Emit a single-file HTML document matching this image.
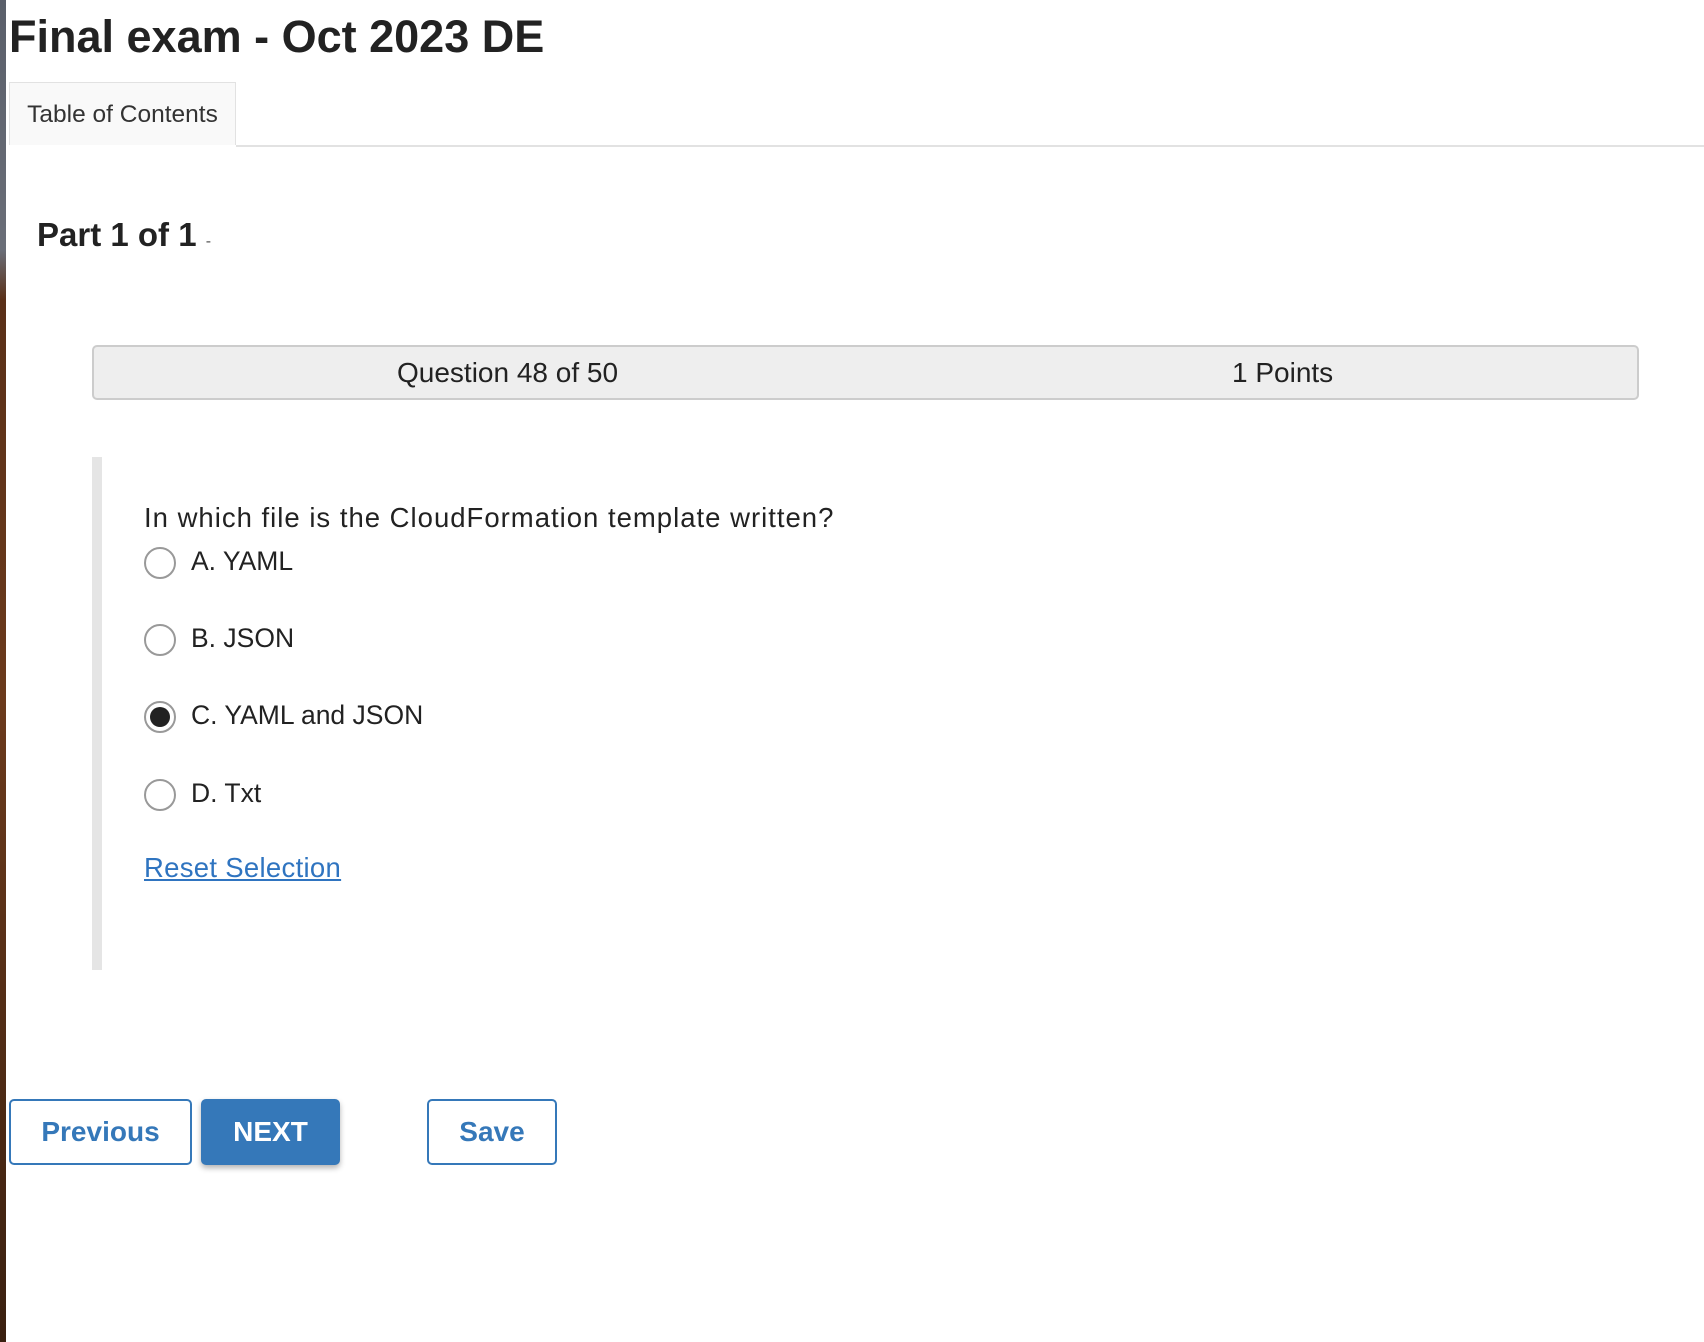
<!DOCTYPE html>
<html><head><meta charset="utf-8"><style>
html,body{margin:0;padding:0;width:1704px;height:1342px;overflow:hidden;background:#fff;font-family:"Liberation Sans",sans-serif;color:#222;position:relative}
.strip{position:absolute;left:0;top:0;width:6px;height:1342px;background:linear-gradient(#5a5f6a 0,#6a6e78 250px,#5a3018 300px,#6b3a1c 700px,#3a2010 1342px)}
.abs{position:absolute;white-space:nowrap}
h1{position:absolute;left:9px;top:11px;margin:0;font-size:45px;font-weight:bold;color:#222}
.tab{position:absolute;left:9px;top:82px;width:227px;height:63px;background:#f9f9f9;border:1px solid #e2e2e2;border-bottom:none;box-sizing:border-box;font-size:24.5px;color:#333;line-height:63px;text-align:center}
.line{position:absolute;left:236px;top:145px;right:0;height:2px;background:#e2e2e2}
.bar{position:absolute;left:92px;top:345px;width:1547px;height:55px;background:#eee;border:2px solid #ccc;border-radius:5px;box-sizing:border-box;font-size:28px;color:#222}
.vbar{position:absolute;left:92px;top:457px;width:10px;height:513px;background:#e5e5e5}
.radio{position:absolute;left:144px;width:28px;height:28px;border:2px solid #999;border-radius:50%;background:#fff}
.radio.on::after{content:"";position:absolute;left:4px;top:4px;width:20px;height:20px;border-radius:50%;background:#222}
.lbl{position:absolute;left:191px;font-size:26.5px;color:#222;white-space:nowrap}
.btn{position:absolute;top:1099px;height:66px;box-sizing:border-box;border:2px solid #3578b9;border-radius:5px;color:#3578b9;font-size:28px;font-weight:bold;text-align:center;line-height:62px;background:#fff}
</style></head><body>
<div class="strip"></div>
<h1>Final exam - Oct 2023 DE</h1>
<div class="tab">Table of Contents</div>
<div class="line"></div>
<div class="abs" style="left:37px;top:216px;font-size:33px;font-weight:bold;color:#222">Part 1 of 1 <span style="font-size:16px;font-weight:normal;color:#555">-</span></div>
<div class="bar">
<span class="abs" style="left:303px;top:10px">Question 48 of 50</span>
<span class="abs" style="left:1138px;top:10px">1 Points</span>
</div>
<div class="vbar"></div>
<div class="abs" style="left:144px;top:502px;font-size:27.5px;letter-spacing:1px">In which file is the CloudFormation template written?</div>
<div class="radio" style="top:547px"></div><div class="lbl" style="top:546px">A. YAML</div>
<div class="radio" style="top:624px"></div><div class="lbl" style="top:623px">B. JSON</div>
<div class="radio on" style="top:701px"></div><div class="lbl" style="top:700px">C. YAML and JSON</div>
<div class="radio" style="top:779px"></div><div class="lbl" style="top:778px">D. Txt</div>
<div class="abs" style="left:144px;top:852px;font-size:27.5px;letter-spacing:0.3px;color:#2f74c0;text-decoration:underline">Reset Selection</div>
<div class="btn" style="left:9px;width:183px">Previous</div>
<div class="btn" style="left:201px;width:139px;background:#3578b9;color:#fff;box-shadow:0 3px 6px rgba(0,0,0,.3)">NEXT</div>
<div class="btn" style="left:427px;width:130px">Save</div>
</body></html>
